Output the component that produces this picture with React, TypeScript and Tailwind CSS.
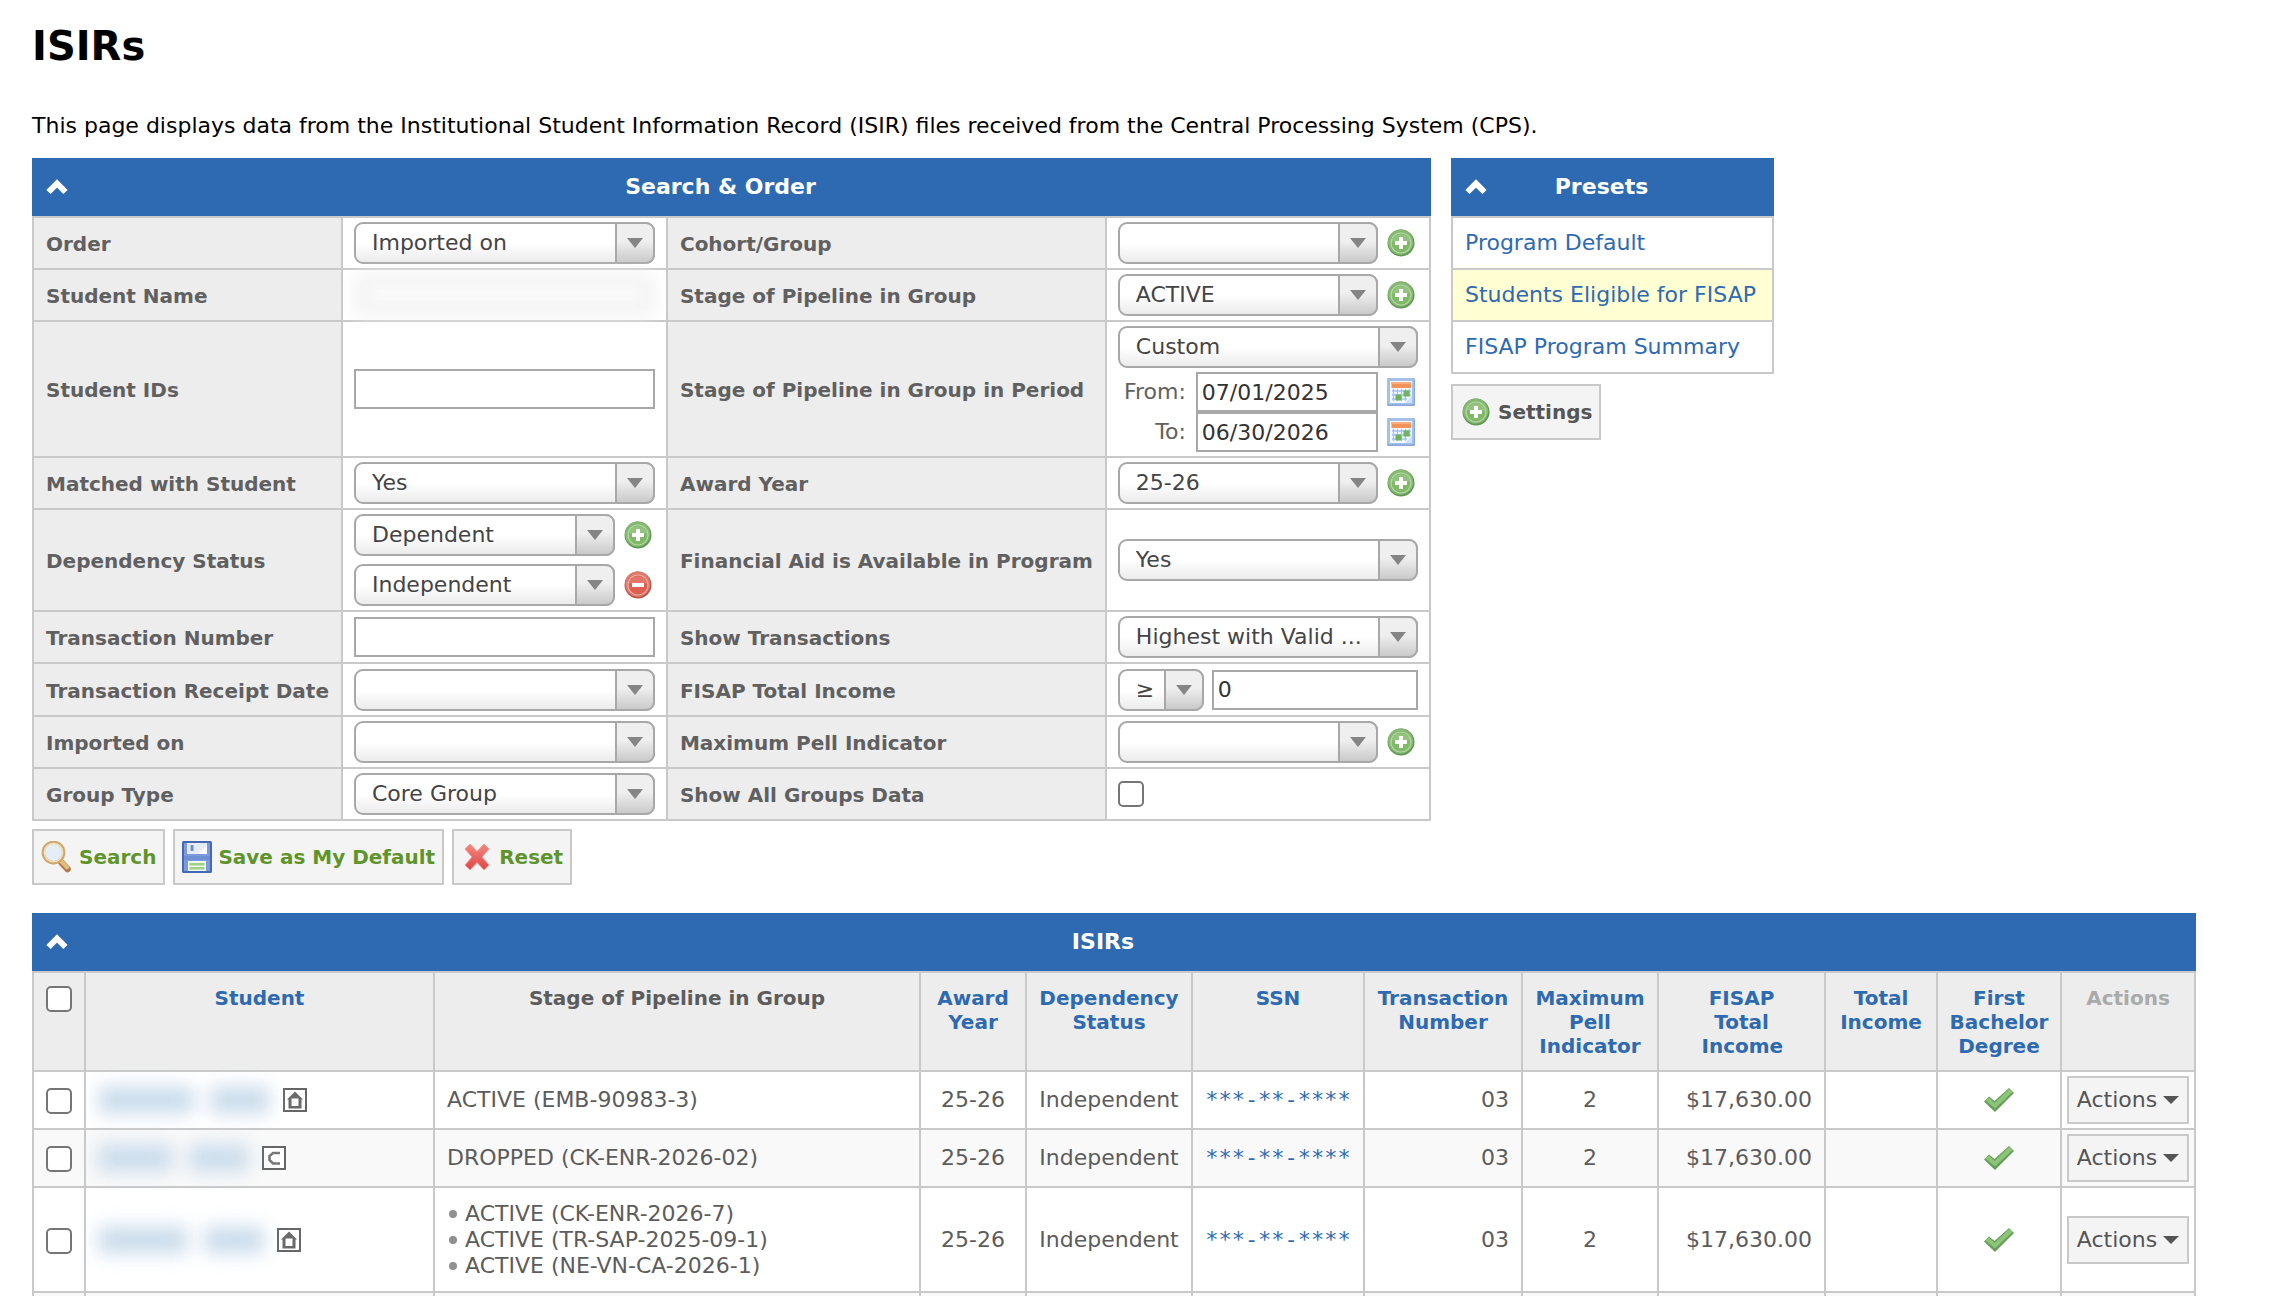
import type { ReactNode } from "react";

const LINE = "border-2 border-[#c9c9c9]";

function Chevron() {
  return (
    <svg width="22" height="16" viewBox="0 0 22 16" fill="none" aria-hidden="true">
      <path d="M2.5 13 L11 4.5 L19.5 13" stroke="#fff" strokeWidth="6" />
    </svg>
  );
}

function PanelHeader({ title }: { title: string }) {
  return (
    <div className="flex h-[58px] items-center bg-[#2e6ab1] pr-[36px] pl-[14px] text-white">
      <button type="button" aria-label={`Collapse ${title}`} className="flex w-[22px] items-center">
        <Chevron />
      </button>
      <h2 className="-ml-[22px] flex-1 text-center text-[22px] leading-[28px] font-bold">{title}</h2>
    </div>
  );
}

function RoundIcon({ kind }: { kind: "add" | "remove" }) {
  const add = kind === "add";
  return (
    <svg width="28" height="28" viewBox="0 0 28 28" aria-hidden="true">
      <circle cx="14" cy="14" r="13.5" fill={add ? "#5f9850" : "#b9544a"} />
      <circle cx="13.6" cy="13.2" r="12.6" fill={add ? "#84b873" : "#dc7a6d"} />
      <circle cx="14" cy="14" r="10.6" fill={add ? "#b4d8a4" : "#f0ada2"} />
      <circle cx="14" cy="14" r="9.4" fill={add ? "#80b968" : "#dd5f50"} />
      <path d="M5 12 A9.4 9.4 0 0 1 23 12 Q14 15 5 12Z" fill="#fff" opacity=".15" />
      <rect x="8" y="12" width="12" height="4" fill="#fff" />
      {add && <rect x="12" y="8" width="4" height="12" fill="#fff" />}
    </svg>
  );
}

function IconButton({ kind, label }: { kind: "add" | "remove"; label: string }) {
  return (
    <button type="button" aria-label={label} className="block">
      <RoundIcon kind={kind} />
    </button>
  );
}

function CalendarIcon() {
  return (
    <svg width="28" height="28" viewBox="0 0 28 28" aria-hidden="true">
      <rect width="28" height="28" rx="1.5" fill="#86a5da" />
      <rect width="27" height="26.5" rx="1.5" fill="#a4bfe8" />
      <rect x="3" y="3" width="22" height="22" fill="#f5f9ff" />
      <rect x="4.5" y="4" width="19.5" height="6" fill="#f3935a" />
      <rect x="4.5" y="4" width="19.5" height="2" fill="#f8ae7f" />
      <path d="M6.5 11v12M10.5 11v12M14.5 11v12M18.5 11v12M22.5 11v8M5 13h19M5 17h19M5 21h15" stroke="#abc4ec" strokeWidth="1.4" />
      <rect x="8.5" y="16.5" width="6" height="6" fill="#6fb35f" />
      <rect x="16.500" y="12.500" width="6" height="6" fill="#6fb35f" />
      <path d="M18 25 L25 18 L25 25Z" fill="#cfdff6" />
    </svg>
  );
}

function SearchIcon() {
  return (
    <svg width="32" height="32" viewBox="0 0 32 32" aria-hidden="true">
      <path d="M20.5 21.5 L26.500 28" stroke="#b07a4c" strokeWidth="6.5" strokeLinecap="round" />
      <path d="M18.5 18.5 L26 26" stroke="#e2bd7c" strokeWidth="4.5" strokeLinecap="round" />
      <circle cx="12.500" cy="11.5" r="10.2" fill="#e5edf6" stroke="#cfa96f" strokeWidth="3.4" />
      <circle cx="12.500" cy="11.5" r="9.200" fill="none" stroke="#f5e4c4" strokeWidth="1.200" />
    </svg>
  );
}

function SaveIcon() {
  return (
    <svg width="30" height="32" viewBox="0 0 30 32" aria-hidden="true">
      <rect width="30" height="32" rx="1.5" fill="#4467b6" />
      <rect x="2" y="2" width="26" height="28" fill="#7b9bdc" />
      <rect x="2" y="15" width="26" height="4" fill="#6c8fd6" />
      <rect x="5" y="2" width="20" height="11" fill="#e6ebf5" />
      <path d="M16 13 L25 4 L25 13Z" fill="#f8fafd" />
      <rect x="8.5" y="4" width="3" height="6" fill="#6d8fd0" />
      <rect x="6" y="20" width="18" height="10" fill="#f3f8ec" />
      <rect x="7.500" y="22" width="15" height="2.5" fill="#9bd086" />
      <rect x="7.500" y="26" width="15" height="2.5" fill="#9bd086" />
    </svg>
  );
}

function ResetIcon() {
  return (
    <svg width="32" height="32" viewBox="0 0 32 32" aria-hidden="true">
      <defs>
        <linearGradient id="resetFill" x1="0" y1="0" x2="0" y2="1">
          <stop offset="0" stopColor="#f4877f" />
          <stop offset="1" stopColor="#e04643" />
        </linearGradient>
      </defs>
      <path
        d="M9 3 L16 10.500 L23 3 L28 8 L21 16 L28 24 L23 29 L16 21.500 L9 29 L4 24 L11 16 L4 8Z"
        fill="url(#resetFill)"
        stroke="#f09a94"
        strokeWidth="1"
        strokeLinejoin="round"
      />
    </svg>
  );
}

function CheckIcon() {
  return (
    <svg width="32" height="26" viewBox="0 0 32 26" className="mx-auto block" role="img" aria-label="Yes">
      <path d="M1 14.5 L6 9.5 L11.5 14 L26 1 L31 6 L12 25Z" fill="#659f57" />
      <path d="M2.5 13.500 L6 10.500 L11.5 16 L26 2 L29.500 5 L12 21.500Z" fill="#8cc479" />
    </svg>
  );
}

function HomeBadge() {
  return (
    <svg width="24" height="24" viewBox="0 0 24 24" role="img" aria-label="Home campus">
      <rect x="1" y="1" width="22" height="22" fill="#fff" stroke="#666" strokeWidth="2" />
      <path d="M12 3.5 L20 11.5 H18.500 V20.500 H5.500 V11.5 H4Z" fill="#6a6a6a" />
      <rect x="8.5" y="10.500" width="7" height="7.500" fill="#fff" />
    </svg>
  );
}

function ConsortiumBadge() {
  return (
    <svg width="24" height="24" viewBox="0 0 24 24" role="img" aria-label="Consortium">
      <rect x="1" y="1" width="22" height="22" fill="#fff" stroke="#666" strokeWidth="2" />
      <path d="M18 7 H11 L7.500 10 V14 L11 17.500 H18" fill="none" stroke="#777" strokeWidth="2.6" />
    </svg>
  );
}

function Select({ id, value, label, narrow }: { id: string; value: string; label?: string; narrow?: boolean }) {
  return (
    <div className={narrow ? "relative w-[86px]" : "relative min-w-0 flex-1"}>
      <select
        id={id}
        aria-label={label}
        defaultValue={value}
        className="block h-[42px] w-full appearance-none rounded-[9px] border-2 border-[#a8a8a8] bg-linear-to-b from-white from-50% to-[#ececec] pr-10 pl-4 text-[22px] leading-[28px] text-[#444]"
      >
        <option value={value}>{value}</option>
      </select>
      <span className="pointer-events-none absolute inset-y-0 right-0 flex w-10 items-center justify-center rounded-r-[9px] border-2 border-[#a8a8a8] bg-linear-to-b from-[#efefef] from-45% to-[#cacaca]">
        <svg width="16" height="10" viewBox="0 0 16 10" aria-hidden="true">
          <path d="M0 0H16L8 10Z" fill="#858585" />
        </svg>
      </span>
    </div>
  );
}

function TextInput({ id, value = "" }: { id: string; value?: string }) {
  return (
    <input
      id={id}
      type="text"
      defaultValue={value}
      className="block h-10 w-full min-w-0 flex-1 border-2 border-[#a8a8a8] bg-white px-1 text-[22px] leading-[28px] text-[#333]"
    />
  );
}

function CheckBox({ id, label }: { id?: string; label?: string }) {
  return (
    <input
      id={id}
      type="checkbox"
      aria-label={label}
      className="block size-[26px] appearance-none rounded-[5px] border-2 border-[#767676] bg-white checked:bg-[#2e6ab1]"
    />
  );
}

function FieldRow({ children }: { children: ReactNode }) {
  return <div className="flex items-center gap-[9px] pr-[3px]">{children}</div>;
}

function LabelCell({ htmlFor, children }: { htmlFor: string; children: ReactNode }) {
  return (
    <th scope="row" className={`${LINE} bg-[#ededed] px-3 pt-[2px] text-left text-[20px] leading-[24px] font-bold text-[#606060]`}>
      <label htmlFor={htmlFor} className="whitespace-nowrap">
        {children}
      </label>
    </th>
  );
}

function FieldCell({ children }: { children: ReactNode }) {
  return <td className={`${LINE} bg-white px-[11px] py-1`}>{children}</td>;
}

function DateRow({ id, label, value }: { id: string; label: string; value: string }) {
  return (
    <div className="flex items-center pr-[3px]">
      <label htmlFor={id} className="w-[78px] pr-[10px] text-right whitespace-nowrap">
        {label}
      </label>
      <TextInput id={id} value={value} />
      <button type="button" aria-label={`Choose date, ${label}`} className="ml-[9px] block">
        <CalendarIcon />
      </button>
    </div>
  );
}

function SearchPanel() {
  return (
    <section>
      <PanelHeader title="Search &amp; Order" />
      <table className="w-full border-collapse text-[22px] leading-[28px] text-[#606060]">
        <colgroup>
          <col className="w-[308px]" />
          <col className="w-[326px]" />
          <col className="w-[437px]" />
          <col className="w-[325px]" />
        </colgroup>
        <tbody>
          <tr>
            <LabelCell htmlFor="order">Order</LabelCell>
            <FieldCell><div className="flex"><Select id="order" value="Imported on" /></div></FieldCell>
            <LabelCell htmlFor="cohort">Cohort/Group</LabelCell>
            <FieldCell><FieldRow><Select id="cohort" value="" /><IconButton kind="add" label="Add cohort" /></FieldRow></FieldCell>
          </tr>
          <tr>
            <LabelCell htmlFor="student-name">Student Name</LabelCell>
            <FieldCell>
              <input id="student-name" type="text" className="block h-[42px] w-full rounded-lg border-[12px] border-[#f2f2f2] bg-[#fbfbfb] blur-[8px]" />
            </FieldCell>
            <LabelCell htmlFor="stage">Stage of Pipeline in Group</LabelCell>
            <FieldCell><FieldRow><Select id="stage" value="ACTIVE" /><IconButton kind="add" label="Add stage" /></FieldRow></FieldCell>
          </tr>
          <tr>
            <LabelCell htmlFor="student-ids">Student IDs</LabelCell>
            <FieldCell><TextInput id="student-ids" /></FieldCell>
            <LabelCell htmlFor="period">Stage of Pipeline in Group in Period</LabelCell>
            <FieldCell>
              <div className="mb-1 flex"><Select id="period" value="Custom" /></div>
              <DateRow id="from" label="From:" value="07/01/2025" />
              <DateRow id="to" label="To:" value="06/30/2026" />
            </FieldCell>
          </tr>
          <tr>
            <LabelCell htmlFor="matched">Matched with Student</LabelCell>
            <FieldCell><div className="flex"><Select id="matched" value="Yes" /></div></FieldCell>
            <LabelCell htmlFor="award-year">Award Year</LabelCell>
            <FieldCell><FieldRow><Select id="award-year" value="25-26" /><IconButton kind="add" label="Add award year" /></FieldRow></FieldCell>
          </tr>
          <tr>
            <LabelCell htmlFor="dependency">Dependency Status</LabelCell>
            <FieldCell>
              <div className="flex flex-col gap-2">
                <FieldRow><Select id="dependency" value="Dependent" /><IconButton kind="add" label="Add status" /></FieldRow>
                <FieldRow><Select id="dependency-2" label="Dependency Status 2" value="Independent" /><IconButton kind="remove" label="Remove status" /></FieldRow>
              </div>
            </FieldCell>
            <LabelCell htmlFor="aid">Financial Aid is Available in Program</LabelCell>
            <FieldCell><div className="flex"><Select id="aid" value="Yes" /></div></FieldCell>
          </tr>
          <tr>
            <LabelCell htmlFor="transaction-number">Transaction Number</LabelCell>
            <FieldCell><TextInput id="transaction-number" /></FieldCell>
            <LabelCell htmlFor="show-transactions">Show Transactions</LabelCell>
            <FieldCell><div className="flex"><Select id="show-transactions" value="Highest with Valid ..." /></div></FieldCell>
          </tr>
          <tr className="h-[53px]">
            <LabelCell htmlFor="receipt-date">Transaction Receipt Date</LabelCell>
            <FieldCell><div className="flex"><Select id="receipt-date" value="" /></div></FieldCell>
            <LabelCell htmlFor="total-income">FISAP Total Income</LabelCell>
            <FieldCell>
              <div className="flex items-center gap-2">
                <Select id="income-operator" label="Comparison" value="≥" narrow />
                <TextInput id="total-income" value="0" />
              </div>
            </FieldCell>
          </tr>
          <tr>
            <LabelCell htmlFor="imported-on">Imported on</LabelCell>
            <FieldCell><div className="flex"><Select id="imported-on" value="" /></div></FieldCell>
            <LabelCell htmlFor="max-pell">Maximum Pell Indicator</LabelCell>
            <FieldCell><FieldRow><Select id="max-pell" value="" /><IconButton kind="add" label="Add indicator" /></FieldRow></FieldCell>
          </tr>
          <tr>
            <LabelCell htmlFor="group-type">Group Type</LabelCell>
            <FieldCell><div className="flex"><Select id="group-type" value="Core Group" /></div></FieldCell>
            <LabelCell htmlFor="all-groups">Show All Groups Data</LabelCell>
            <FieldCell><CheckBox id="all-groups" /></FieldCell>
          </tr>
        </tbody>
      </table>
    </section>
  );
}

function BoxButton({ icon, tone, children }: { icon: ReactNode; tone: string; children: ReactNode }) {
  return (
    <button type="button" className={`${LINE} ${tone} flex h-14 items-center gap-[6px] bg-[#f4f4f4] px-[7px] text-[20px] leading-[24px] font-bold whitespace-nowrap`}>
      {icon}
      {children}
    </button>
  );
}

function PresetsPanel() {
  const presets = ["Program Default", "Students Eligible for FISAP", "FISAP Program Summary"];
  return (
    <aside className="w-[323px]">
      <PanelHeader title="Presets" />
      <ul className={`${LINE} divide-y-2 divide-[#c9c9c9] text-[22px] leading-[28px]`}>
        {presets.map((name, i) => (
          <li key={name} className={i === 1 ? "bg-[#ffffd3]" : "bg-white"}>
            <a href="#" className="flex h-[50px] items-center px-3 whitespace-nowrap text-[#2e6ab1]">{name}</a>
          </li>
        ))}
      </ul>
      <div className="mt-[10px] flex">
        <BoxButton tone="text-[#555]" icon={<span className="mx-[2px]"><RoundIcon kind="add" /></span>}>Settings</BoxButton>
      </div>
    </aside>
  );
}

type Row = { words: [string, string]; badge: ReactNode; stages: string[]; height: string; tint: string };

const ROWS: Row[] = [
  { words: ["w-[96px]", "w-[60px]"], badge: <HomeBadge />, stages: ["ACTIVE (EMB-90983-3)"], height: "h-[58px]", tint: "bg-white" },
  { words: ["w-[75px]", "w-[60px]"], badge: <ConsortiumBadge />, stages: ["DROPPED (CK-ENR-2026-02)"], height: "h-[58px]", tint: "bg-[#f9f9f9]" },
  {
    words: ["w-[90px]", "w-[60px]"],
    badge: <HomeBadge />,
    stages: ["ACTIVE (CK-ENR-2026-7)", "ACTIVE (TR-SAP-2025-09-1)", "ACTIVE (NE-VN-CA-2026-1)"],
    height: "h-[105px]",
    tint: "bg-white",
  },
];

const COLUMNS = [
  { title: "Student", width: "w-[349px]" },
  { title: "Stage of Pipeline in Group", width: "", plain: true },
  { title: "Award Year", width: "w-[106px]" },
  { title: "Dependency Status", width: "w-[166px]" },
  { title: "SSN", width: "w-[172px]" },
  { title: "Transaction Number", width: "w-[158px]" },
  { title: "Maximum Pell Indicator", width: "w-[136px]" },
  { title: "FISAP Total Income", width: "w-[167px]" },
  { title: "Total Income", width: "w-[112px]" },
  { title: "First Bachelor Degree", width: "w-[124px]" },
];

function IsirTable() {
  const cell = `${LINE} px-2`;
  return (
    <section className="mt-7">
      <PanelHeader title="ISIRs" />
      <table className="w-full table-fixed border-collapse text-[22px] leading-[26px] text-[#5c5c5c]">
        <colgroup>
          <col className="w-[52px]" />
          {COLUMNS.map((c) => (
            <col key={c.title} className={c.width} />
          ))}
          <col className="w-[134px]" />
        </colgroup>
        <thead>
          <tr className="h-[99px] bg-[#ededed] align-top text-[20px] leading-[24px]">
            <th className={`${LINE} px-3 pt-[13px]`}><CheckBox label="Select all" /></th>
            {COLUMNS.map((c) => (
              <th key={c.title} className={`${LINE} px-2 pt-[13px] font-bold`}>
                {c.plain ? c.title : (
                  <a href="#" className={c.title === "FISAP Total Income" ? "mx-auto block w-[80px] text-[#2e6ab1]" : "-mx-2 block text-[#2e6ab1]"}>{c.title}</a>
                )}
              </th>
            ))}
            <th className={`${LINE} px-1 pt-[13px] font-bold text-[#aaa]`}>Actions</th>
          </tr>
        </thead>
        <tbody>
          {ROWS.map((r) => (
            <tr key={r.stages[0]} className={`${r.height} ${r.tint}`}>
              <td className={`${LINE} px-3 pt-[2px]`}><CheckBox label="Select row" /></td>
              <td className={`${LINE} px-3`}>
                <div className="flex items-center">
                  <a href="#" aria-label="Student record" className="mr-[13px] flex gap-4 blur-[9px]">
                    <span className={`${r.words[0]} block h-7 rounded-md bg-[#ccdded]`} />
                    <span className={`${r.words[1]} block h-7 rounded-md bg-[#ccdded]`} />
                  </a>
                  {r.badge}
                </div>
              </td>
              <td className={`${LINE} px-3`}>
                {r.stages.length === 1 ? r.stages[0] : (
                  <ul>
                    {r.stages.map((s) => (
                      <li key={s} className="flex items-center gap-2 pl-[2px]">
                        <span className="size-2 rounded-full bg-[#909090]" />
                        {s}
                      </li>
                    ))}
                  </ul>
                )}
              </td>
              <td className={`${cell} text-center`}>25-26</td>
              <td className={`${cell} text-center`}>Independent</td>
              <td className={`${cell} text-center`}>
                <a href="#" className="font-['DejaVu_Sans_Mono',monospace] text-[#2e6ab1]">***-**-****</a>
              </td>
              <td className={`${LINE} px-3 text-right`}>03</td>
              <td className={`${cell} text-center`}>2</td>
              <td className={`${LINE} px-3 text-right`}>$17,630.00</td>
              <td className={cell} />
              <td className={cell}><CheckIcon /></td>
              <td className={`${LINE} px-[5px]`}>
                <button type="button" className={`${LINE} flex h-12 w-full items-center justify-center gap-[6px] bg-[#f4f4f4] text-[#555]`}>
                  Actions
                  <svg width="16" height="8" viewBox="0 0 16 8" aria-hidden="true"><path d="M0 0H16L8 8Z" fill="#555" /></svg>
                </button>
              </td>
            </tr>
          ))}
          <tr className="h-[58px] bg-[#f9f9f9]">
            {Array.from({ length: 12 }, (_, i) => (
              <td key={i} className={LINE} />
            ))}
          </tr>
        </tbody>
      </table>
    </section>
  );
}

export default function App() {
  return (
    <main className="h-screen overflow-hidden bg-white pt-6 pr-[88px] pl-8 font-[Verdana,'DejaVu_Sans',sans-serif] text-black">
      <h1 className="text-[40px] leading-[44px] font-bold">ISIRs</h1>
      <p className="mt-11 mb-[18px] text-[22px] leading-[28px]">
        This page displays data from the Institutional Student Information Record (ISIR) files received from the Central
        Processing System (CPS).
      </p>
      <div className="flex items-start gap-5">
        <div className="w-[1399px]">
          <SearchPanel />
          <div className="mt-2 flex gap-2">
            <BoxButton tone="text-[#5f942b]" icon={<SearchIcon />}>Search</BoxButton>
            <BoxButton tone="text-[#5f942b]" icon={<SaveIcon />}>Save as My Default</BoxButton>
            <BoxButton tone="text-[#5f942b]" icon={<ResetIcon />}>Reset</BoxButton>
          </div>
        </div>
        <PresetsPanel />
      </div>
      <IsirTable />
    </main>
  );
}
